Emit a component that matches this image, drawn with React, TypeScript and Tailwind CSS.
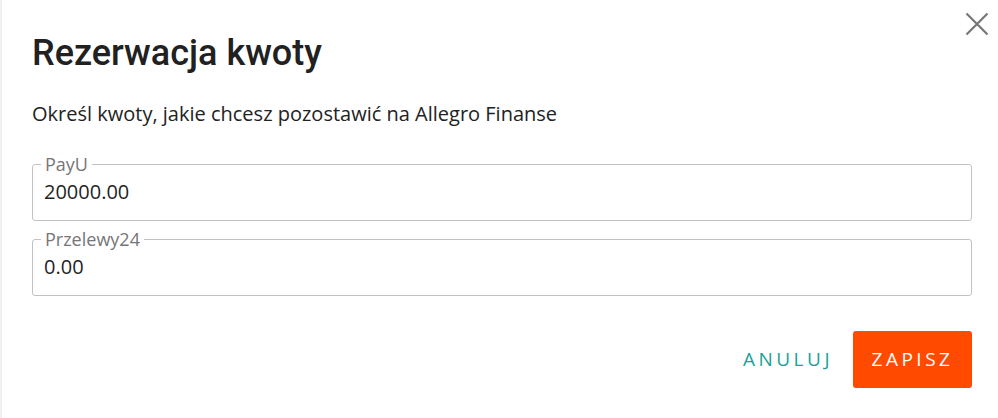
import React from "react";

function Field({ label, value }: { label: string; value: string }) {
  return (
    <div className="relative h-[57px] w-[940px] rounded-[3px] border border-[#c2c2c2] pl-[11px] pt-[13px]">
      <span className="absolute left-[8px] top-[-10px] bg-white px-[4px] text-[18px] leading-[18px] text-[#767676]">
        {label}
      </span>
      <div className="text-[20px] leading-[28px] text-[#1f1f1f]">{value}</div>
    </div>
  );
}

export default function App() {
  return (
    <div
      className="relative h-[418px] w-[998px] border-l-2 border-[#efefef] bg-white"
      style={{ fontFamily: '"Open Sans", sans-serif' }}
    >
      <button className="absolute right-[8px] top-[11px] h-[26px] w-[26px] text-[#777777]" aria-label="close">
        <svg viewBox="0 0 26 26" width="26" height="26" fill="none" stroke="currentColor" strokeWidth="2.2">
          <path d="M2.5 2.5 L23.5 23.5 M23.5 2.5 L2.5 23.5" />
        </svg>
      </button>
      <div className="flex flex-col pl-[30px] pt-[32px]">
        <h1
          className="text-[36px] font-medium leading-[42px] text-[#212121]"
          style={{ fontFamily: "Roboto, sans-serif" }}
        >
          Rezerwacja kwoty
        </h1>
        <p className="mt-[26px] text-[20px] leading-[28px] text-[#222222]">
          Określ kwoty, jakie chcesz pozostawić na Allegro Finanse
        </p>
        <div className="mt-[36px] flex flex-col gap-[18px]">
          <Field label="PayU" value="20000.00" />
          <Field label="Przelewy24" value="0.00" />
        </div>
        <div className="mt-[35px] flex w-[940px] items-center justify-end">
          <button className="mr-[20px] text-[19px] tracking-[3.5px] text-[#17a397]">ANULUJ</button>
          <button className="h-[57px] w-[119px] rounded-[3px] bg-[#ff4a00] text-[19px] tracking-[3.5px] text-white">
            ZAPISZ
          </button>
        </div>
      </div>
    </div>
  );
}
